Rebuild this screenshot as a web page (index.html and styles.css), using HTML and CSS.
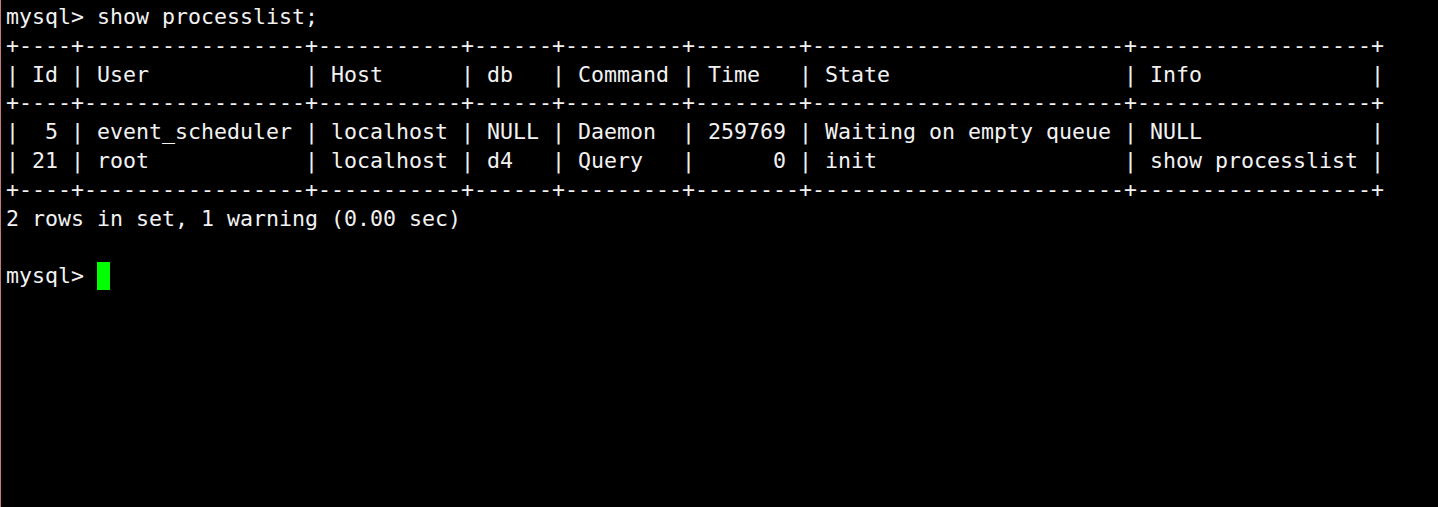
FILE: index.html
```html
<!DOCTYPE html>
<html>
<head>
<meta charset="utf-8">
<link rel="stylesheet" href="styles.css">
</head>
<body>
<div class="term">
<pre class="screen">mysql&gt; show processlist;
+----+-----------------+-----------+------+---------+--------+------------------------+------------------+
| Id | User            | Host      | db   | Command | Time   | State                  | Info             |
+----+-----------------+-----------+------+---------+--------+------------------------+------------------+
|  5 | event_scheduler | localhost | NULL | Daemon  | 259769 | Waiting on empty queue | NULL             |
| 21 | root            | localhost | d4   | Query   |      0 | init                   | show processlist |
+----+-----------------+-----------+------+---------+--------+------------------------+------------------+
2 rows in set, 1 warning (0.00 sec)

mysql&gt; <span class="cursor"> </span></pre>
</div>
</body>
</html>
```
FILE: styles.css
```css
html, body {
  margin: 0;
  padding: 0;
  background: #000;
  height: 100%;
}
.term {
  height: 507px;
  box-sizing: border-box;
  border-left: 1px solid #c87878;
  padding: 3px 0 0 5px;
  overflow: hidden;
}
.screen {
  margin: 0;
  font-family: "DejaVu Sans Mono", monospace;
  font-size: 21.6px;
  line-height: 28.8px;
  color: #f2f2f2;
}
.cursor {
  background: #00ff00;
  display: inline-block;
  width: 13px;
  height: 28px;
  vertical-align: top;
}
```
